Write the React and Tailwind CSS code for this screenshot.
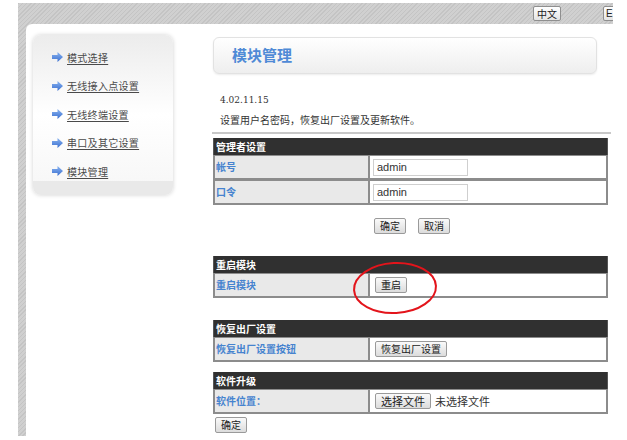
import React from 'react'

const cjk = { fontFamily: '"Noto Sans CJK SC", "Liberation Sans", sans-serif' }

const menu = ['模式选择', '无线接入点设置', '无线终端设置', '串口及其它设置', '模块管理']

const Arrow = () => (
    <svg width="11" height="10" viewBox="0 0 11 10" className="shrink-0">
        <defs>
            <linearGradient id="arr" x1="0" y1="0" x2="0" y2="1">
                <stop offset="0" stopColor="#8ab4f0" />
                <stop offset="1" stopColor="#3a6fd0" />
            </linearGradient>
        </defs>
        <polygon points="0,3 5.5,3 5.5,0 11,5 5.5,10 5.5,7 0,7" fill="url(#arr)" />
    </svg>
)

const Btn = ({ children, className = '' }) => (
    <button className={`h-[16px] px-[5px] text-[10px] leading-[14px] text-[#222] border border-[#9a9a9a] rounded-[2px] bg-gradient-to-b from-[#fafafa] to-[#dcdcdc] ${className}`} style={cjk}>
        {children}
    </button>
)

const Section = ({ title, rows, className = '' }) => (
    <div className={`w-[395px] ${className}`}>
        <div className="h-[17px] bg-[#303030] border-x border-[#555] text-white font-bold text-[10px] leading-[17px] pl-[2px]" style={cjk}>{title}</div>
        {rows.map((r, i) => (
            <div key={i} className="flex h-[25px] border-2 border-t-[1px] border-[#8c8c8c]">
                <div className="w-[155px] shrink-0 bg-[#e9e9e9] border-r-2 border-[#8c8c8c] text-[10px] font-bold text-[#4683cf] leading-[22px] pl-[1px]" style={cjk}>{r.label}</div>
                <div className="flex-1 flex items-center pl-[3px] relative">{r.content}</div>
            </div>
        ))}
    </div>
)

const Input = ({ value }) => (
    <input readOnly value={value} className="w-[95px] h-[17px] border border-[#cfcfcf] px-[3px] text-[11px] text-[#333] outline-none" style={{ fontFamily: '"Liberation Sans", sans-serif' }} />
)

export default function App() {
    return (
        <div className="w-[627px] h-[440px] bg-white pl-[18px] pt-[3px] overflow-hidden">
            <div className="w-[595px] h-[433px] flex flex-col overflow-hidden bg-[repeating-linear-gradient(135deg,#c4c4c4_0px,#c4c4c4_1px,#d0d0d0_1px,#d0d0d0_3px)]">
                {/* top bar */}
                <div className="h-[21px] shrink-0 flex items-center pl-[515px]">
                    <div className="h-[15px] w-[28px] shrink-0 border border-[#8f8f8f] rounded-[2px] bg-gradient-to-b from-white to-[#e4e4e4] text-[10px] leading-[13px] text-center text-[#222]" style={cjk}>中文</div>
                    <div className="h-[15px] w-[40px] shrink-0 ml-[42px] border border-[#8f8f8f] rounded-[2px] bg-gradient-to-b from-white to-[#e4e4e4] text-[10px] leading-[13px] pl-[2px] text-[#222]" style={{ fontFamily: '"Liberation Sans", sans-serif' }}>E</div>
                </div>

                {/* white panel */}
                <div className="flex-1 ml-[8px] bg-white rounded-tl-[6px] flex pl-[7px] pt-[11px]">
                    {/* sidebar */}
                    <div className="w-[140px] h-[160px] shrink-0 rounded-[8px] shadow-[0_0_4px_rgba(0,0,0,0.18)] bg-gradient-to-b from-[#ececec] via-white to-[#f6f6f6] flex flex-col overflow-hidden">
                        <div className="flex-1 flex flex-col pl-[19px] pt-[14px] gap-[12.5px]">
                            {menu.map((m) => (
                                <div key={m} className="flex items-center gap-[4px] h-[16px]">
                                    <Arrow />
                                    <span className="text-[10px] tracking-[0.3px] text-[#4a4a4a] underline underline-offset-2" style={cjk}>{m}</span>
                                </div>
                            ))}
                        </div>
                        <div className="h-[14px] bg-[#e9e9e9]" />
                    </div>

                    {/* main */}
                    <div className="ml-[40px] mt-[2px] w-[398px] flex flex-col">
                        <div className="w-[384px] h-[37px] shrink-0 rounded-[6px] border border-[#e2e2e2] bg-gradient-to-b from-white to-[#eeeeee] shadow-[0_1px_2px_rgba(0,0,0,0.08)] pl-[18px] flex items-center">
                            <span className="text-[15px] font-bold text-[#4f8ad6]" style={cjk}>模块管理</span>
                        </div>

                        <div className="mt-[20px] pl-[7px] text-[9px] leading-[12px] text-[#333]" style={{ fontFamily: '"DejaVu Serif", serif' }}>4.02.11.15</div>
                        <div className="mt-[8px] pl-[7px] text-[10px] leading-[12px] text-[#333]" style={cjk}>设置用户名密码，恢复出厂设置及更新软件。</div>
                        <div className="mt-[6px] -ml-[1px] w-[399px] border-t-2 border-[#c8c8c8]" />

                        <Section
                            className="mt-[4px]"
                            title="管理者设置"
                            rows={[
                                { label: '帐号', content: <Input value="admin" /> },
                                { label: '口令', content: <Input value="admin" /> },
                            ]}
                        />
                        <div className="w-[395px] flex justify-center gap-[12px] mt-[13px] pl-[3px]">
                            <Btn>确定</Btn>
                            <Btn>取消</Btn>
                        </div>

                        <Section
                            className="mt-[22px]"
                            title="重启模块"
                            rows={[
                                {
                                    label: '重启模块',
                                    content: (
                                        <>
                                            <Btn className="ml-[2px]">重启</Btn>
                                            <svg className="absolute left-[-18px] top-[-13px] pointer-events-none" width="86" height="54" viewBox="0 0 86 54">
                                                <ellipse cx="43" cy="27" rx="41" ry="25" fill="none" stroke="#e3141b" strokeWidth="2" transform="rotate(-3 43 27)" />
                                            </svg>
                                        </>
                                    ),
                                },
                            ]}
                        />

                        <Section
                            className="mt-[22px]"
                            title="恢复出厂设置"
                            rows={[{ label: '恢复出厂设置按钮', content: <Btn className="ml-[2px]">恢复出厂设置</Btn> }]}
                        />

                        <Section
                            className="mt-[10px]"
                            title="软件升级"
                            rows={[
                                {
                                    label: '软件位置：',
                                    content: (
                                        <div className="flex items-center ml-[2px]">
                                            <Btn className="text-[11px] px-[4px]">选择文件</Btn>
                                            <span className="ml-[4px] text-[11px] text-[#333]" style={cjk}>未选择文件</span>
                                        </div>
                                    ),
                                },
                            ]}
                        />
                        <div className="mt-[3px] pl-[2px] flex">
                            <Btn>确定</Btn>
                        </div>
                    </div>
                </div>
            </div>
        </div>
    )
}
